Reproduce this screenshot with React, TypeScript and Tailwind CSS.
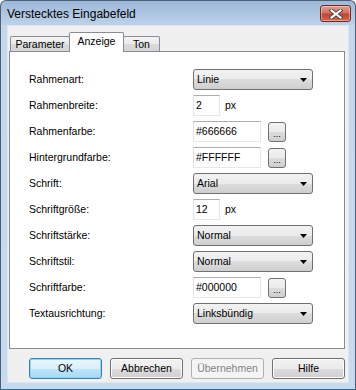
import React from "react";

const font = { fontFamily: '"Liberation Sans", Arial, sans-serif' };

function Label({ children }: { children: React.ReactNode }) {
  return <div className="w-[164px] shrink-0 text-[10.5px] text-black">{children}</div>;
}

function Select({ value }: { value: string }) {
  return (
    <div className="w-[120px] h-[21px] rounded-[3px] border border-[#707070] bg-[linear-gradient(to_bottom,#f2f2f2,#ebebeb_50%,#dddddd_50%,#cfcfcf)] flex items-center justify-between pl-[3px] pr-[5px] text-[10.5px] text-black">
      <span>{value}</span>
      <svg width="7" height="4" viewBox="0 0 7 4"><polygon points="0,0 7,0 3.5,4" fill="#000" /></svg>
    </div>
  );
}

function Input({ value, w }: { value: string; w: string }) {
  return (
    <div className={`${w} h-[21px] bg-white border border-[#e3e9ef] border-t-[#abadb3] border-l-[#e2e3ea] flex items-center pl-[2px] text-[10.5px] text-black`}>
      {value}
    </div>
  );
}

function Dots() {
  return (
    <div className="ml-[7px] w-[18px] h-[20px] rounded-[3px] border border-[#707070] bg-[linear-gradient(to_bottom,#f2f2f2,#ebebeb_50%,#dddddd_50%,#cfcfcf)] flex items-end justify-center pb-[2px] text-[9px] leading-[9px] text-black">
      ...
    </div>
  );
}

function Row({ label, children }: { label: string; children: React.ReactNode }) {
  return (
    <div className="flex items-center h-[21px]">
      <Label>{label}</Label>
      <div className="flex items-center">{children}</div>
    </div>
  );
}

function Btn({ children, kind }: { children: React.ReactNode; kind?: "default" | "disabled" }) {
  if (kind === "default")
    return (
      <div className="w-[73px] h-[21px] rounded-[3px] border border-[#3c7fb1] bg-[linear-gradient(to_bottom,#eaf6fd,#d9f0fc_50%,#bee6fd_50%,#a7d9f5)] shadow-[inset_0_0_0_1px_#8fd3f7] flex items-center justify-center text-[10.5px] text-black">
        {children}
      </div>
    );
  if (kind === "disabled")
    return (
      <div className="w-[73px] h-[21px] rounded-[3px] border border-[#adb2b5] bg-[#f4f4f4] flex items-center justify-center text-[10.5px] text-[#838383]">
        {children}
      </div>
    );
  return (
    <div className="w-[73px] h-[21px] rounded-[3px] border border-[#707070] bg-[linear-gradient(to_bottom,#f2f2f2,#ebebeb_50%,#dddddd_50%,#cfcfcf)] shadow-[inset_0_0_0_1px_#fcfcfc] flex items-center justify-center text-[10.5px] text-black">
      {children}
    </div>
  );
}

export default function App() {
  return (
    <div style={font} className="w-[356px] h-[390px] flex flex-col rounded-t-[6px] border border-[#4d5f73] border-b-[#2a6f8f] bg-[linear-gradient(to_bottom,#9db8d8,#bdd2ea_24px,#c3d7ed_24px,#c6dbef)] overflow-hidden">
      {/* Title bar */}
      <div className="h-[24px] flex items-start justify-between pl-[6px] pr-[4px] shrink-0">
        <div className="pt-[6px] text-[12px] leading-[14px] text-black">Verstecktes Eingabefeld</div>
        <div className="mt-[4px] w-[31px] h-[17px] rounded-[3px] border border-[#6e2a22] bg-[linear-gradient(to_bottom,#e3a394,#d0705c_45%,#c0432f_55%,#cf6a4f)] shadow-[inset_0_0_0_1px_rgba(255,220,210,0.5)] flex items-center justify-center">
          <svg width="14" height="10" viewBox="0 0 14 10">
            <path d="M2.5 1.5 L11.5 8.5 M11.5 1.5 L2.5 8.5" stroke="#4a4a4a" strokeWidth="4" strokeLinecap="square" />
            <path d="M2.5 1.5 L11.5 8.5 M11.5 1.5 L2.5 8.5" stroke="#ffffff" strokeWidth="2" strokeLinecap="square" />
          </svg>
        </div>
      </div>
      {/* Client area */}
      <div className="mx-[6px] mb-[6px] flex-1 border border-[#dfe6ee] bg-[#f0f0f0] flex flex-col pt-[6px]">
        <div className="ml-[1px] mr-[3px] flex flex-col">
          {/* Tabs */}
          <div className="h-[19px] flex items-end pl-[1px] text-[10.5px] text-black">
            <div className="w-[60px] h-[15px] border border-b-0 border-[#898c95] rounded-t-[2px] bg-[linear-gradient(to_bottom,#f4f4f4,#e9e9e9_50%,#dadada_50%,#d6d6d6)] flex items-center justify-center pt-[1px]">
              Parameter
            </div>
            <div className="relative z-10 -ml-[1px] -mb-[1px] w-[55px] h-[20px] border border-b-0 border-[#898c95] rounded-t-[2px] bg-white flex items-center justify-center pb-[1px]">
              Anzeige
            </div>
            <div className="-ml-[1px] w-[37px] h-[15px] border border-b-0 border-[#898c95] rounded-t-[2px] bg-[linear-gradient(to_bottom,#f4f4f4,#e9e9e9_50%,#dadada_50%,#d6d6d6)] flex items-center justify-center pt-[1px]">
              Ton
            </div>
          </div>
          {/* Panel */}
          <div className="h-[298px] border border-[#898c95] bg-white pt-[17px] pl-[19px] flex flex-col gap-[5px]">
            <Row label="Rahmenart:"><Select value="Linie" /></Row>
            <Row label="Rahmenbreite:"><Input value="2" w="w-[27px]" /><span className="ml-[5px] text-[10.5px] text-black">px</span></Row>
            <Row label="Rahmenfarbe:"><Input value="#666666" w="w-[68px]" /><Dots /></Row>
            <Row label="Hintergrundfarbe:"><Input value="#FFFFFF" w="w-[68px]" /><Dots /></Row>
            <Row label="Schrift:"><Select value="Arial" /></Row>
            <Row label="Schriftgröße:"><Input value="12" w="w-[27px]" /><span className="ml-[5px] text-[10.5px] text-black">px</span></Row>
            <Row label="Schriftstärke:"><Select value="Normal" /></Row>
            <Row label="Schriftstil:"><Select value="Normal" /></Row>
            <Row label="Schriftfarbe:"><Input value="#000000" w="w-[68px]" /><Dots /></Row>
            <Row label="Textausrichtung:"><Select value="Linksbündig" /></Row>
          </div>
        </div>
        {/* Buttons */}
        <div className="mt-[9px] mr-[3px] flex justify-end gap-[8px]">
          <Btn kind="default">OK</Btn>
          <Btn>Abbrechen</Btn>
          <Btn kind="disabled">Übernehmen</Btn>
          <Btn>Hilfe</Btn>
        </div>
      </div>
    </div>
  );
}
